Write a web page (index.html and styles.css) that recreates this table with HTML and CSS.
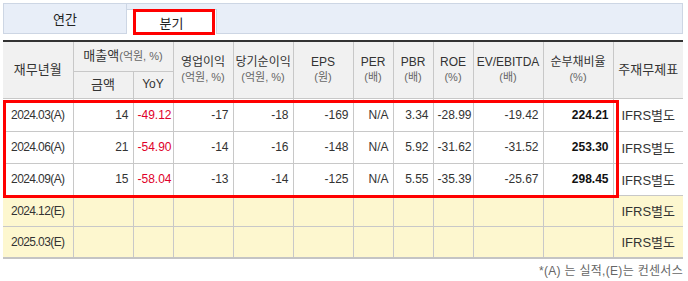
FILE: index.html
```html
<!DOCTYPE html>
<html lang="ko">
<head>
<meta charset="utf-8">
<link rel="stylesheet" href="styles.css">
</head>
<body>
<div class="page">
  <div class="tabs">
    <div class="tab">연간</div>
    <div class="tab active">분기<span class="mark tab-mark"></span></div>
    <div class="tab-rest"></div>
  </div>
  <div class="table-wrap">
    <table class="fin">
      <colgroup>
        <col class="w70"><col class="w60"><col class="w40"><col class="w60"><col class="w60"><col class="w60">
        <col class="w40"><col class="w40"><col class="w40"><col class="w70"><col class="w70"><col class="w70">
      </colgroup>
      <thead>
        <tr class="h1">
          <th rowspan="2" class="big">재무년월</th>
          <th colspan="2" class="big">매출액<span class="unit">(억원, %)</span></th>
          <th rowspan="2">영업이익<br><span class="unit">(억원, %)</span></th>
          <th rowspan="2">당기순이익<br><span class="unit">(억원, %)</span></th>
          <th rowspan="2">EPS<br><span class="unit">(원)</span></th>
          <th rowspan="2">PER<br><span class="unit">(배)</span></th>
          <th rowspan="2">PBR<br><span class="unit">(배)</span></th>
          <th rowspan="2">ROE<br><span class="unit">(%)</span></th>
          <th rowspan="2">EV/EBITDA<br><span class="unit">(배)</span></th>
          <th rowspan="2">순부채비율<br><span class="unit">(%)</span></th>
          <th rowspan="2" class="big">주재무제표</th>
        </tr>
        <tr class="h2">
          <th class="big">금액</th>
          <th>YoY</th>
        </tr>
      </thead>
      <tbody>
        <tr class="r1">
          <td class="date">2024.03(A)</td><td>14</td><td class="neg">-49.12</td><td>-17</td><td>-18</td><td>-169</td>
          <td>N/A</td><td>3.34</td><td>-28.99</td><td>-19.42</td><td class="strong">224.21</td><td class="ctr">IFRS별도</td>
        </tr>
        <tr class="r2">
          <td class="date">2024.06(A)</td><td>21</td><td class="neg">-54.90</td><td>-14</td><td>-16</td><td>-148</td>
          <td>N/A</td><td>5.92</td><td>-31.62</td><td>-31.52</td><td class="strong">253.30</td><td class="ctr">IFRS별도</td>
        </tr>
        <tr class="r2">
          <td class="date">2024.09(A)</td><td>15</td><td class="neg">-58.04</td><td>-13</td><td>-14</td><td>-125</td>
          <td>N/A</td><td>5.55</td><td>-35.39</td><td>-25.67</td><td class="strong">298.45</td><td class="ctr">IFRS별도</td>
        </tr>
        <tr class="est">
          <td class="date">2024.12(E)</td><td></td><td></td><td></td><td></td><td></td>
          <td></td><td></td><td></td><td></td><td></td><td class="ctr">IFRS별도</td>
        </tr>
        <tr class="est">
          <td class="date">2025.03(E)</td><td></td><td></td><td></td><td></td><td></td>
          <td></td><td></td><td></td><td></td><td></td><td class="ctr">IFRS별도</td>
        </tr>
      </tbody>
    </table>
    <span class="mark rows-mark"></span>
  </div>
  <div class="note">*(A) 는 실적,(E)는 컨센서스</div>
</div>
</body>
</html>
```
FILE: styles.css
```css
html, body {
  margin: 0;
  padding: 0;
  background: #fff;
}
body {
  font-family: "Liberation Sans", "Noto Sans CJK KR", sans-serif;
  font-size: 12px;
  color: #333;
}
.page {
  width: 680px;
  padding: 3px 0 0 3px;
}
.tabs {
  display: flex;
  height: 29px;
  background: #e8eef8;
  border: 1px solid #cdd6e4;
  box-sizing: content-box;
}
.tab {
  width: 122px;
  display: flex;
  align-items: center;
  justify-content: center;
  font-size: 13px;
  color: #222;
  border-right: 1px solid #cdd6e4;
}
.tab.active {
  position: relative;
  width: 89px;
  background: #fff;
  margin-top: 5px;
  margin-bottom: -1px;
  border-top: 1px solid #cdd6e4;
}
.tab-rest {
  flex: 1;
}
.mark {
  position: absolute;
  border: 3px solid #f00;
  box-sizing: border-box;
  pointer-events: none;
}
.tab-mark {
  left: 6px;
  top: -1px;
  width: 82px;
  height: 26px;
}
.table-wrap {
  position: relative;
  margin-top: 6px;
}
.fin {
  width: 680px;
  border-collapse: collapse;
  table-layout: fixed;
  border-top: 2px solid #333;
  border-bottom: 2px solid #c4c4c4;
}
.w70 { width: 70px; }
.w60 { width: 60px; }
.w40 { width: 40px; }
.fin th, .fin td {
  border: 1px solid #c8c8c8;
  padding: 0 4px;
  white-space: nowrap;
  overflow: visible;
}
.fin tr > :first-child { border-left: none; }
.fin tr > :last-child { border-right: none; }
.fin th {
  background: #f1f1f1;
  font-weight: normal;
  font-size: 12px;
  color: #333;
  line-height: 15px;
  text-align: center;
  padding: 0 2px;
}
.fin th.big {
  font-size: 13px;
}
.fin .unit {
  font-size: 11px;
  color: #666;
}
.h1 { height: 30px; }
.h2 { height: 27px; }
.h2 th { border-left: 1px solid #c8c8c8; }
.fin td {
  text-align: right;
  height: 31px;
  font-size: 12px;
}
.r1 td { height: 32px; }
.est td {
  background: #fdf7cf;
  height: 30px;
}
.fin td.date {
  text-align: center;
  padding: 0;
  letter-spacing: -0.6px;
}
.fin td.ctr {
  text-align: center;
  font-size: 13px;
}
.neg { color: #e0002a; }
.strong { font-weight: bold; color: #111; }
.rows-mark {
  left: 0;
  top: 60px;
  width: 616px;
  height: 98px;
}
.note {
  text-align: right;
  font-size: 12px;
  letter-spacing: 0.3px;
  color: #666;
  margin-top: 2px;
  white-space: nowrap;
}
```
